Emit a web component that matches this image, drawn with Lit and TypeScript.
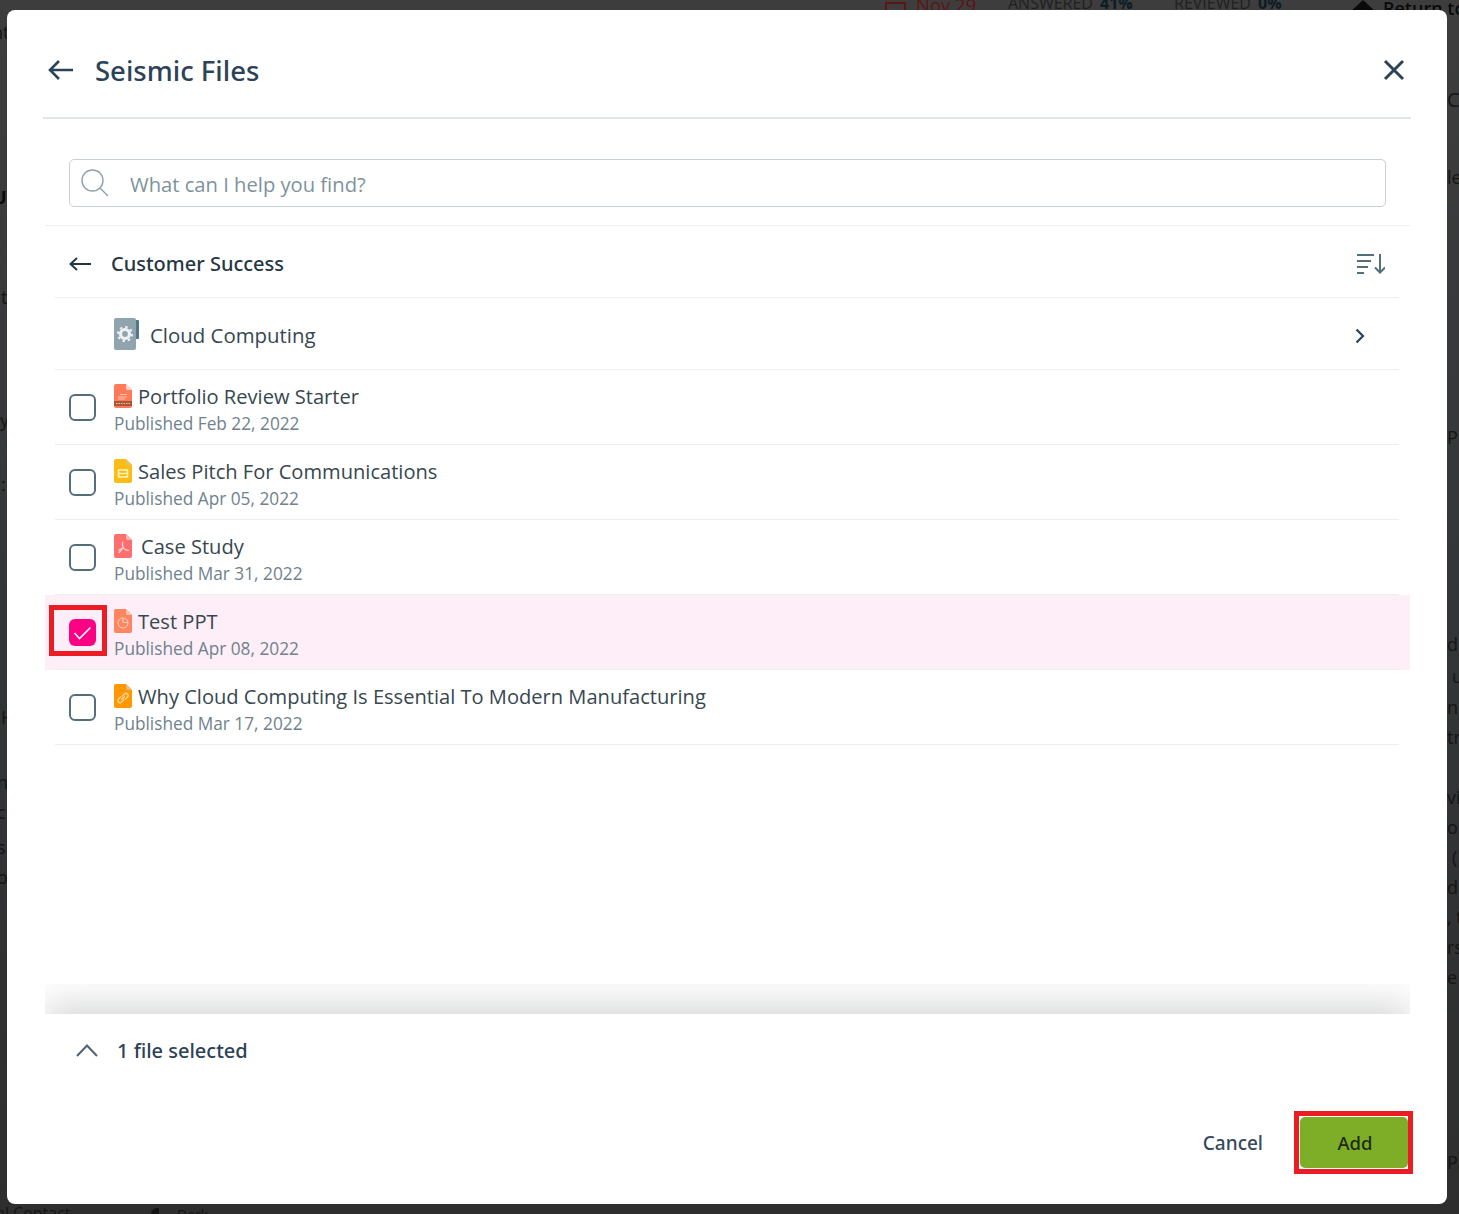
import { LitElement, html, css, svg } from "lit";
import { customElement } from "lit/decorators.js";

type FileRow = { name: string; date: string; kind: string; selected?: boolean; nameGap?: number };

const files: FileRow[] = [
    { name: "Portfolio Review Starter", date: "Published Feb 22, 2022", kind: "doc" },
    { name: "Sales Pitch For Communications", date: "Published Apr 05, 2022", kind: "slides" },
    { name: "Case Study", date: "Published Mar 31, 2022", kind: "pdf", nameGap: 9 },
    { name: "Test PPT", date: "Published Apr 08, 2022", kind: "ppt", selected: true },
    { name: "Why Cloud Computing Is Essential To Modern Manufacturing", date: "Published Mar 17, 2022", kind: "link" },
];

// bits of the page behind the dialog that peek out round its edges
const behind = [
    { t: "Nov 29", x: 916, y: -5, c: "#5e1414", s: 18.5 },
    { t: "ANSWERED", x: 1008, y: -7, c: "#202020", s: 16 },
    { t: "41%", x: 1100, y: -7, c: "#0c1c24", s: 16, b: 700 },
    { t: "REVIEWED", x: 1174, y: -7, c: "#202020", s: 16 },
    { t: "0%", x: 1258, y: -7, c: "#0c1c24", s: 16, b: 700 },
    { t: "Return to", x: 1383, y: -2, c: "#0a0a0a", s: 18, b: 600 },
    { t: "C", x: 1447, y: 90, c: "#141414", s: 20 },
    { t: "le", x: 1447, y: 167, c: "#141414", s: 18 },
    { t: "P", x: 1447, y: 427, c: "#141414", s: 18 },
    { t: "d:", x: 1447, y: 634, c: "#141414", s: 18 },
    { t: "u", x: 1452, y: 666, c: "#141414", s: 18 },
    { t: "n", x: 1447, y: 697, c: "#141414", s: 18 },
    { t: "tr", x: 1447, y: 727, c: "#141414", s: 18 },
    { t: "vit", x: 1447, y: 787, c: "#141414", s: 18 },
    { t: "or", x: 1447, y: 817, c: "#141414", s: 18 },
    { t: "(", x: 1452, y: 847, c: "#141414", s: 18 },
    { t: "de", x: 1447, y: 877, c: "#141414", s: 18 },
    { t: ", t", x: 1447, y: 907, c: "#141414", s: 18 },
    { t: "rs", x: 1447, y: 937, c: "#141414", s: 18 },
    { t: "e", x: 1447, y: 967, c: "#141414", s: 18 },
    { t: "P[", x: 1447, y: 1152, c: "#141414", s: 18 },
    { t: "nt", x: -8, y: 22, c: "#141414", s: 18 },
    { t: "U", x: -7, y: 187, c: "#0a0a0a", s: 18, b: 700 },
    { t: "t", x: 1, y: 287, c: "#141414", s: 18 },
    { t: "y", x: 0, y: 410, c: "#141414", s: 18 },
    { t: ":", x: 1, y: 474, c: "#141414", s: 18 },
    { t: "H", x: 1, y: 707, c: "#141414", s: 18 },
    { t: "n", x: -3, y: 772, c: "#141414", s: 18 },
    { t: "c", x: -3, y: 802, c: "#141414", s: 18 },
    { t: "s", x: -3, y: 837, c: "#141414", s: 18 },
    { t: "o", x: -3, y: 867, c: "#141414", s: 18 },
    { t: "al Contact", x: -4, y: 1203, c: "#141414", s: 16 },
    { t: "Dark", x: 177, y: 1205, c: "#141414", s: 14 },
];

const sheet = (body: string, corner: string, inner: unknown) => svg`
    <path d="M2 0H12L18 6V22a2 2 0 0 1-2 2H2a2 2 0 0 1-2-2V2a2 2 0 0 1 2-2Z" fill=${body} />
    <path d="M12 0L18 6H13.5a1.5 1.5 0 0 1-1.5-1.5Z" fill=${corner} />
    ${inner}
`;

const fileIcons: Record<string, unknown> = {
    doc: sheet("#ff7a59", "#ffd3c6", svg`
        <path d="M6 10.5h7M4 13h9M4 15h7" stroke="#ffc4b2" stroke-width="1" fill="none" />
        <rect x="0" y="17" width="18" height="5" fill="#a8553c" />
        <path d="M2 19.5h4M7 19.5h4M12 19.5h4" stroke="#f1c4b5" stroke-width="1.2" stroke-dasharray="1 .5" />
    `),
    slides: sheet("#fbbc13", "#e0c36a", svg`
        <rect x="4.5" y="11" width="9" height="7" rx=".5" fill="none" stroke="#fff2c4" stroke-width="1.6" />
        <path d="M4.5 14.5h9" stroke="#fff2c4" stroke-width="1.4" />
    `),
    pdf: sheet("#fd6f6f", "#f7b6b6", svg`
        <path d="M9 8c-.8 0-.8 2.5 0 5 .7 2 2.2 3.2 5.5 3.4M9 13c-.8 2-2.2 4.2-4 5.4M9.5 14c-1.600.4-3.300 1-4.500 2" stroke="#ffd9d9" stroke-width="1.200" fill="none" stroke-linecap="round" />
    `),
    ppt: sheet("#ff8560", "#f6c3b1", svg`
        <circle cx="9" cy="14" r="5" fill="none" stroke="#ffd5c6" stroke-width="1" />
        <path d="M9 9.500V13.500H14" fill="none" stroke="#ffd5c6" stroke-width="1" />
    `),
    link: sheet("#ff9800", "#e7bd79", svg`
        <path d="M8 12.500l2.500-2.500a2 2 0 0 1 3 3L11 15.500M10 15.500L7.500 18a2 2 0 0 1-3-3L7 12.500M7.500 15.500l3.500-3" stroke="#ffd9a3" stroke-width="1.200" fill="none" />
    `),
};

@customElement("app-root")
export class AppRoot extends LitElement {
    render() {
        return html`
            <div class="page">
                ${behind.map(
                    (b) => html`<span
                        class="peek"
                        style="left:${b.x}px;top:${b.y}px;color:${b.c};font-size:${b.s}px;font-weight:${b.b ?? 400}"
                        >${b.t}</span
                    >`
                )}
                <div class="cal"></div>
                <div class="tri"></div>
                <div class="moon"></div>
                <div class="dialog">
                    <div class="head">
                        <svg class="back" viewBox="0 0 26 22" width="26" height="22">
                            <path d="M25 11H2M11 2l-9 9 9 9" fill="none" stroke="#2c4257" stroke-width="2.600" />
                        </svg>
                        <h1>Seismic Files</h1>
                        <svg class="close" viewBox="0 0 22 22" width="22" height="22">
                            <path d="M2 2l18 18M20 2L2 20" stroke="#2c4257" stroke-width="3" fill="none" />
                        </svg>
                    </div>
                    <div class="search">
                        <svg viewBox="0 0 28 28" width="28" height="28">
                            <circle cx="11.500" cy="11.500" r="10.500" fill="none" stroke="#8fa3ae" stroke-width="1.400" />
                            <path d="M19 19l8 8" stroke="#8fa3ae" stroke-width="1.400" />
                        </svg>
                        <span>What can I help you find?</span>
                    </div>
                    <div class="crumb">
                        <svg viewBox="0 0 22 14" width="22" height="14">
                            <path d="M22 7H1.500M8 1L1.500 7 8 13" fill="none" stroke="#263742" stroke-width="2" />
                        </svg>
                        <span>Customer Success</span>
                        <svg class="sort" viewBox="0 0 28 20" width="28" height="20">
                            <path d="M0 1h17M0 7h14M0 13h11M0 19h7" stroke="#546e7a" stroke-width="2" fill="none" />
                            <path d="M23 0v18M18 13.500l5 5 5-5" stroke="#546e7a" stroke-width="2" fill="none" />
                        </svg>
                    </div>
                    <div class="folder">
                        <svg viewBox="0 0 25 32" width="25" height="32">
                            <rect x="20" y="2" width="5" height="19" rx="1" fill="#55778a" />
                            <rect x="0" y="0" width="22" height="32" rx="2" fill="#90a4ae" />
                            <circle cx="11" cy="16" r="4.500" fill="none" stroke="#eef2f4" stroke-width="3.200" />
                            <circle cx="11" cy="16" r="7" fill="none" stroke="#eef2f4" stroke-width="2" stroke-dasharray="2.500 3" />
                        </svg>
                        <span>Cloud Computing</span>
                        <svg class="chev" viewBox="0 0 10 16" width="10" height="16">
                            <path d="M1.500 1.500L8 8l-6.500 6.500" fill="none" stroke="#2c4257" stroke-width="2.200" />
                        </svg>
                    </div>
                    ${files.map(
                        (f) => html`
                            <div class="row ${f.selected ? "on" : ""}">
                                <div class="line">
                                    <div class="box">
                                        ${f.selected
                                            ? html`<svg viewBox="0 0 27 27" width="27" height="27">
                                                  <path d="M5.500 14l5 5.500L21.500 8.500" fill="none" stroke="#fff" stroke-width="1.600" />
                                              </svg>`
                                            : ""}
                                    </div>
                                    <div class="info">
                                        <div class="name">
                                            <svg viewBox="0 0 18 24" width="18" height="24">${fileIcons[f.kind]}</svg>
                                            <span style="margin-left:${f.nameGap ?? 6}px">${f.name}</span>
                                        </div>
                                        <div class="date">${f.date}</div>
                                    </div>
                                </div>
                                ${f.selected ? html`<div class="mark"></div>` : ""}
                            </div>
                        `
                    )}
                    <div class="spacer"></div>
                    <div class="fade"></div>
                    <div class="count">
                        <svg viewBox="0 0 22 14" width="22" height="14">
                            <path d="M1 13L11 2.500 21 13" fill="none" stroke="#546270" stroke-width="2" />
                        </svg>
                        <span>1 file selected</span>
                    </div>
                    <div class="actions">
                        <span class="cancel">Cancel</span>
                        <div class="add-wrap"><div class="add">Add</div></div>
                    </div>
                </div>
            </div>
        `;
    }

    static styles = css`
        :host {
            display: block;
            font-family: "Open Sans", "Noto Sans", sans-serif;
        }
        .page {
            position: relative;
            width: 1459px;
            height: 1214px;
            overflow: hidden;
            background: linear-gradient(to bottom, #3d3d3d, #333638 50%, #2e2e2e);
        }
        .peek {
            position: absolute;
            line-height: 20px;
            white-space: nowrap;
        }
        .cal {
            position: absolute;
            left: 885px;
            top: 2px;
            width: 17px;
            height: 14px;
            border: 2px solid #5e1414;
        }
        .tri {
            position: absolute;
            left: 1350px;
            top: 0;
            width: 26px;
            height: 12px;
            background: #0a0a0a;
            clip-path: polygon(50% 0, 100% 100%, 0 100%);
        }
        .moon {
            position: absolute;
            left: 151px;
            top: 1208px;
            width: 8px;
            height: 12px;
            border-radius: 8px 0 0 8px;
            background: #141414;
        }
        .dialog {
            position: absolute;
            left: 7px;
            top: 10px;
            width: 1440px;
            height: 1194px;
            background: #fff;
            border-radius: 8px;
            display: flex;
            flex-direction: column;
        }
        .head {
            height: 109px;
            box-sizing: border-box;
            margin: 0 36px;
            padding: 13px 5px 0;
            border-bottom: 2px solid #e3e6e8;
            display: flex;
            align-items: center;
            flex-shrink: 0;
        }
        .head h1 {
            margin: 0 0 0 21px;
            font-family: "Noto Sans", sans-serif;
            font-size: 27.500px;
            font-weight: 500;
            color: #2c4257;
        }
        .close {
            margin-left: auto;
            margin-right: 1px;
        }
        .search {
            margin: 40px 61px 0 62px;
            height: 46px;
            border: 1px solid #c8d0d6;
            border-radius: 5px;
            display: flex;
            align-items: center;
            padding-left: 11px;
            flex-shrink: 0;
        }
        .search span {
            margin-left: 21px;
            padding-top: 1px;
            font-size: 20.200px;
            color: #7e929d;
        }
        .crumb {
            margin: 18px 37px 0 38px;
            height: 67px;
            padding: 4px 0 0 24px;
            border-top: 1px solid #eceef0;
            display: flex;
            align-items: center;
            font-family: "Noto Sans", sans-serif;
            font-size: 20px;
            font-weight: 500;
            color: #263742;
            flex-shrink: 0;
        }
        .crumb span {
            margin-left: 20px;
        }
        .sort {
            margin-left: auto;
            margin-right: 25px;
        }
        .folder {
            margin: 0 48px;
            height: 71px;
            border-top: 1px solid #eceef0;
            border-bottom: 1px solid #eceef0;
            display: flex;
            align-items: center;
            padding-left: 59px;
            font-size: 20.400px;
            color: #37474f;
            flex-shrink: 0;
        }
        .folder span {
            margin: 2px 0 0 11px;
        }
        .chev {
            margin: 4px 34px 0 auto;
        }
        .row {
            position: relative;
            margin: 0 37px 0 38px;
            height: 75px;
            flex-shrink: 0;
        }
        .row.on {
            background: #fdeef7;
        }
        .line {
            height: 74px;
            margin: 0 11px 0 10px;
            border-bottom: 1px solid #eceef0;
            display: flex;
            align-items: center;
            padding-left: 14px;
        }
        .box {
            width: 27px;
            height: 27px;
            box-sizing: border-box;
            border: 2px solid #546e7a;
            border-radius: 6px;
            flex-shrink: 0;
        }
        .on .box {
            border: none;
            background: #ff0085;
        }
        .info {
            margin-left: 18px;
            padding-top: 7px;
        }
        .name {
            display: flex;
            align-items: center;
            height: 26px;
            font-size: 20.100px;
            color: #37474f;
        }
        .name svg {
            margin-top: -3px;
        }
        .name span {
            margin-top: -2px;
        }
        .date {
            font-size: 17.250px;
            line-height: 26px;
            color: #6f828d;
        }
        .mark {
            position: absolute;
            left: 4px;
            top: 10px;
            width: 58px;
            height: 51px;
            box-sizing: border-box;
            border: 5px solid #ed1c24;
        }
        .spacer {
            flex: 1;
        }
        .fade {
            position: relative;
            overflow: hidden;
            margin: 0 37px 0 38px;
            height: 30px;
            flex-shrink: 0;
        }
        .fade::after {
            content: "";
            position: absolute;
            left: 0;
            right: 0;
            top: 100%;
            height: 60px;
            box-shadow: 0 -10px 36px rgba(30, 35, 40, 0.18);
        }
        .count {
            height: 72px;
            display: flex;
            align-items: center;
            padding-left: 69px;
            font-family: "Noto Sans", sans-serif;
            font-size: 20px;
            font-weight: 500;
            color: #2c4257;
            flex-shrink: 0;
        }
        .count span {
            margin-left: 19px;
        }
        .actions {
            height: 118px;
            display: flex;
            align-items: flex-start;
            justify-content: flex-end;
            padding-right: 34px;
            flex-shrink: 0;
            font-family: "Noto Sans", sans-serif;
        }
        .cancel {
            margin: 42px 31px 0 0;
            font-size: 19px;
            font-weight: 500;
            line-height: 30px;
            color: #35495c;
        }
        .add-wrap {
            margin-top: 25px;
            width: 119px;
            height: 63px;
            box-sizing: border-box;
            border: 5px solid #ed1c24;
            padding: 1px 0 1px 1px;
        }
        .add {
            height: 100%;
            background: #7eae27;
            border-radius: 5px;
            color: #1c2b12;
            font-size: 18.500px;
            font-weight: 500;
            display: flex;
            align-items: center;
            justify-content: center;
            padding-left: 2px;
            box-sizing: border-box;
        }
    `;
}
